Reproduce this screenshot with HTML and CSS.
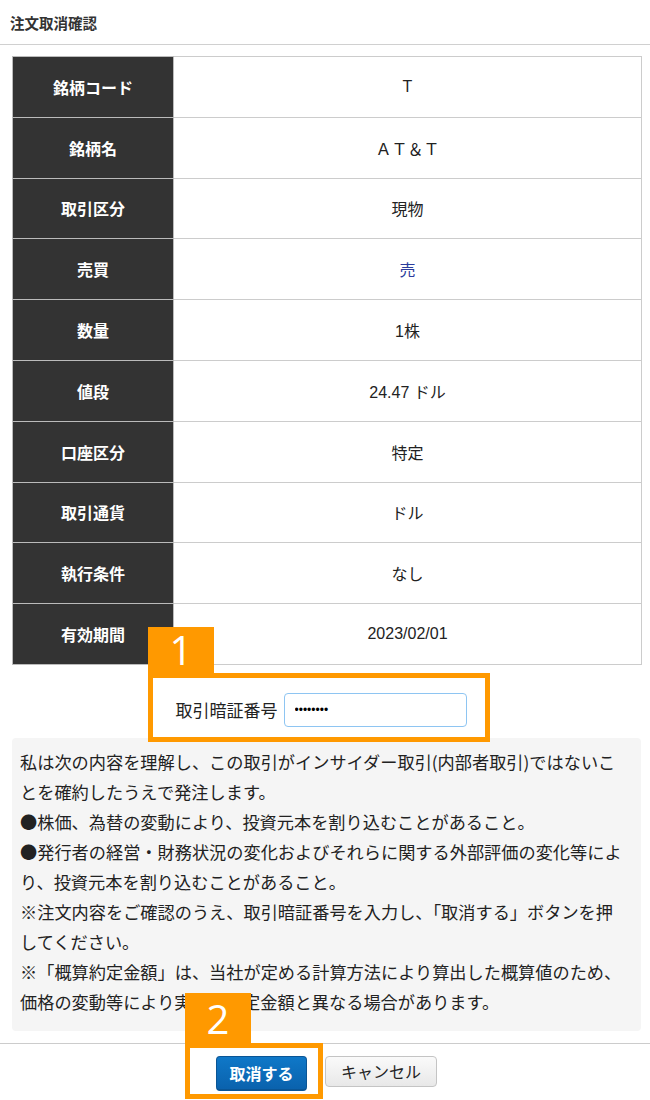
FILE: index.html
```html
<!DOCTYPE html>
<html lang="ja">
<head>
    <meta charset="UTF-8">
    <meta name="viewport" content="width=device-width, initial-scale=1.0">
    <link rel="stylesheet" href="styles.css">
</head>
<body>
    <div class="page">
        <h1 class="page-title">注文取消確認</h1>

        <table class="order-table">
            <tr><th>銘柄コード</th><td>T</td></tr>
            <tr><th>銘柄名</th><td>ＡＴ＆Ｔ</td></tr>
            <tr><th>取引区分</th><td>現物</td></tr>
            <tr><th>売買</th><td class="sell">売</td></tr>
            <tr><th>数量</th><td>1株</td></tr>
            <tr><th>値段</th><td>24.47 ドル</td></tr>
            <tr><th>口座区分</th><td>特定</td></tr>
            <tr><th>取引通貨</th><td>ドル</td></tr>
            <tr><th>執行条件</th><td>なし</td></tr>
            <tr><th>有効期間</th><td>2023/02/01</td></tr>
        </table>

        <div class="pin-row">
            <label for="pin">取引暗証番号</label>
            <input type="password" id="pin" value="12345678">
            <div class="callout callout-pin"><span class="callout-tab">1</span></div>
        </div>

        <div class="notice">
            <p>私は次の内容を理解し、この取引がインサイダー取引(内部者取引)ではないことを確約したうえで発注します。</p>
            <p>●株価、為替の変動により、投資元本を割り込むことがあること。</p>
            <p>●発行者の経営・財務状況の変化およびそれらに関する外部評価の変化等により、投資元本を割り込むことがあること。</p>
            <p>※注文内容をご確認のうえ、取引暗証番号を入力し、「取消する」ボタンを押してください。</p>
            <p>※「概算約定金額」は、当社が定める計算方法により算出した概算値のため、価格の変動等により実際の約定金額と異なる場合があります。</p>
        </div>

        <div class="actions">
            <button class="btn btn-primary">取消する</button>
            <button class="btn btn-cancel">キャンセル</button>
            <div class="callout callout-submit"><span class="callout-tab">2</span></div>
        </div>
    </div>
</body>
</html>
```

FILE: styles.css
```css
body {
    margin: 0;
    padding: 0;
    background-color: #fff;
    color: #222;
    font-family: "Liberation Sans", "Noto Sans CJK JP", sans-serif;
}

.page {
    width: 650px;
    height: 1100px;
    overflow: hidden;
}

.page-title {
    margin: 0;
    padding: 12px 10px 0;
    height: 32px;
    font-size: 14.5px;
    font-weight: bold;
    color: #333;
    border-bottom: 1px solid #d0d0d0;
}

.order-table {
    width: 630px;
    margin: 11px 0 0 12px;
    border-collapse: collapse;
    font-size: 16px;
}

.order-table th,
.order-table td {
    height: 59.8px;
    padding: 0;
    border: 1px solid #ccc;
    text-align: center;
}

.order-table th {
    width: 160px;
    background-color: #333;
    color: #fff;
    border-color: #bbb;
}

.order-table td {
    background-color: #fff;
}

.order-table .sell {
    color: #2b3c9c;
}

.pin-row {
    position: relative;
    display: flex;
    justify-content: center;
    align-items: center;
    gap: 6px;
    margin-top: 28px;
    padding-right: 8px;
    height: 34px;
    font-size: 17px;
}

.pin-row label {
    color: #222;
}

.pin-row input {
    width: 183px;
    height: 34px;
    box-sizing: border-box;
    padding: 0 10px;
    border: 1px solid #8ec5f2;
    border-radius: 4px;
    font-size: 12px;
    outline: none;
}

.notice {
    margin: 11px 9px 0 12px;
    padding: 9px 8px 14px;
    background-color: #f5f5f5;
    border-radius: 4px;
    font-family: "Noto Sans CJK JP", sans-serif;
    font-size: 17.2px;
    line-height: 30px;
    color: #222;
}

.notice p {
    margin: 0;
    width: calc(35em + 4px);
}

.actions {
    position: relative;
    display: flex;
    justify-content: center;
    align-items: flex-start;
    gap: 18px;
    margin-top: 12px;
    padding-top: 12px;
    border-top: 1px solid #ccc;
}

.btn {
    font-family: "Noto Sans CJK JP", sans-serif;
    font-size: 16px;
    border-radius: 4px;
    cursor: pointer;
}

.btn-primary {
    width: 91px;
    height: 35px;
    margin-left: 3px;
    color: #fff;
    font-weight: bold;
    background: linear-gradient(#0f78c8, #0a62ad);
    border: 1px solid #0a5595;
    border-bottom-width: 2px;
}

.btn-cancel {
    width: 112px;
    height: 31px;
    color: #222;
    background: linear-gradient(#fafafa, #e8e8e8);
    border: 1px solid #c4c4c4;
}

/* annotation overlays */
.callout {
    position: absolute;
    border: 5px solid #ff9900;
    box-sizing: border-box;
    pointer-events: none;
}

.callout-tab {
    position: absolute;
    left: -5px;
    bottom: 100%;
    width: 66px;
    height: 51px;
    background-color: #ff9900;
    color: #fff;
    font-family: "Open Sans", sans-serif;
    font-size: 40px;
    line-height: 46px;
    text-align: center;
}

.callout-pin {
    left: 148px;
    top: -20px;
    width: 342px;
    height: 69px;
}

.callout-submit {
    left: 185px;
    top: -1px;
    width: 138px;
    height: 56px;
}

.callout-submit .callout-tab {
    height: 55px;
    line-height: 52px;
}
```
